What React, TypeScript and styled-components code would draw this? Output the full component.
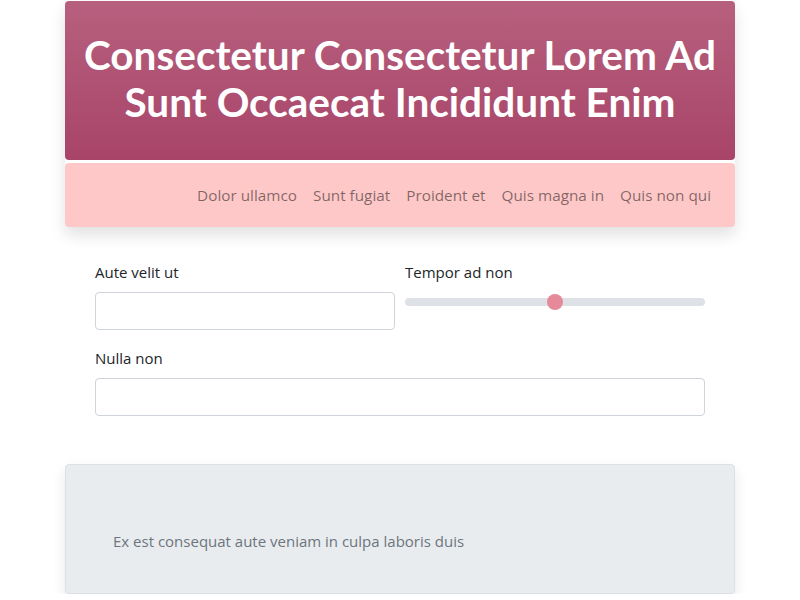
import React from "react";
import styled, { createGlobalStyle } from "styled-components";

const Global = createGlobalStyle`
  html, body { margin: 0; padding: 0; background: #ffffff; }
  body { font-family: "Open Sans", "Noto Sans", sans-serif; color: #212529; }
  * { box-sizing: border-box; }
`;

const Page = styled.div`
  width: 670px;
  margin: 0 auto;
  padding-top: 1px;
`;

const Top = styled.div`
  display: flex;
  flex-direction: column;
  gap: 3px;
  border-radius: 4px;
  box-shadow: 0 8px 16px rgba(0, 0, 0, 0.12);
`;

const Header = styled.header`
  height: 159px;
  display: flex;
  align-items: center;
  justify-content: center;
  padding-bottom: 5px;
  background: linear-gradient(180deg, #b7607e 0%, #a84468 100%);
  border-radius: 4px;
`;

const Title = styled.h1`
  margin: 0;
  padding: 0 16px;
  text-align: center;
  white-space: nowrap;
  color: #ffffff;
  font-family: "Lato", "Open Sans", sans-serif;
  font-size: 40.5px;
  font-weight: 700;
  line-height: 47px;
`;

const Nav = styled.nav`
  height: 64px;
  display: flex;
  align-items: center;
  justify-content: flex-end;
  padding: 0 16px;
  background: #ffc8c8;
  border-radius: 4px;
`;

const NavLink = styled.a`
  padding: 0 8px;
  font-size: 15.3px;
  color: rgba(0, 0, 0, 0.5);
  text-decoration: none;
`;

const Form = styled.div`
  display: grid;
  grid-template-columns: 1fr 1fr;
  column-gap: 10px;
  row-gap: 17px;
  padding: 34px 30px 0;
`;

const Field = styled.div<{ $full?: boolean }>`
  display: flex;
  flex-direction: column;
  gap: 9px;
  grid-column: ${(p) => (p.$full ? "1 / -1" : "auto")};
`;

const Label = styled.label`
  font-size: 15px;
  line-height: 22px;
  color: #212529;
`;

const Input = styled.input`
  height: 38px;
  width: 100%;
  border: 1px solid #ced4da;
  border-radius: 4px;
  background: #fff;
  font: inherit;
  padding: 6px 12px;
`;

const Track = styled.div`
  position: relative;
  height: 8px;
  margin-top: 6px;
  border-radius: 4px;
  background: #dee2e6;
`;

const Thumb = styled.div`
  position: absolute;
  top: 50%;
  width: 16px;
  height: 16px;
  margin: -8px 0 0 -8px;
  border-radius: 50%;
  background: #e68a9b;
`;

const Card = styled.div`
  margin-top: 48px;
  height: 130px;
  display: flex;
  align-items: center;
  padding: 23px 47px 0;
  background: #e9ecef;
  border: 1px solid #dcdfe3;
  border-radius: 4px;
  box-shadow: 0 6px 14px rgba(0, 0, 0, 0.1);
  color: #6c757d;
  font-size: 15px;
`;

export default function App() {
  const value = 50;
  return (
    <>
      <Global />
      <Page>
        <Top>
          <Header>
            <Title>
              Consectetur Consectetur Lorem Ad
              <br />
              Sunt Occaecat Incididunt Enim
            </Title>
          </Header>
          <Nav>
            <NavLink>Dolor ullamco</NavLink>
            <NavLink>Sunt fugiat</NavLink>
            <NavLink>Proident et</NavLink>
            <NavLink>Quis magna in</NavLink>
            <NavLink>Quis non qui</NavLink>
          </Nav>
        </Top>
        <Form>
          <Field>
            <Label>Aute velit ut</Label>
            <Input />
          </Field>
          <Field>
            <Label>Tempor ad non</Label>
            <Track>
              <Thumb style={{ left: `${value}%` }} />
            </Track>
          </Field>
          <Field $full>
            <Label>Nulla non</Label>
            <Input />
          </Field>
        </Form>
        <Card>Ex est consequat aute veniam in culpa laboris duis</Card>
      </Page>
    </>
  );
}
